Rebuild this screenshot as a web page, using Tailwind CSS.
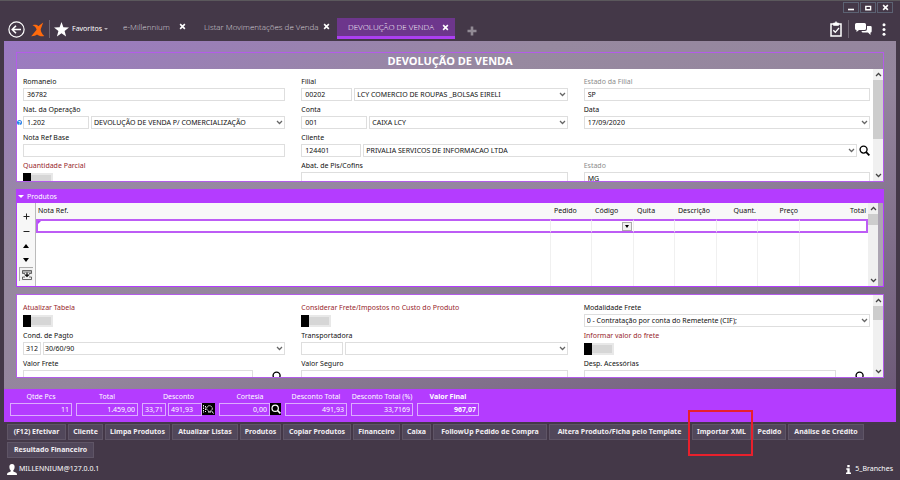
<!DOCTYPE html>
<html lang="pt-BR">
<head>
<meta charset="utf-8">
<title>Devolução de Venda</title>
<script src="https://cdn.jsdelivr.net/npm/@tailwindcss/browser@4"></script>
</head>
<body class="flex h-screen flex-col overflow-hidden border-t border-[#5b585c] bg-[#443848] font-['Noto_Sans','Open_Sans',sans-serif] text-[7px] leading-3 text-[#111]">
<svg class="hidden">
  <symbol id="chev" viewBox="0 0 8 6"><path d="M1 1.2 4 4.2 7 1.2" fill="none" stroke="currentColor" stroke-width="1.5"/></symbol>
  <symbol id="lens" viewBox="0 0 12 12"><circle cx="5" cy="5" r="3.8" fill="none" stroke="currentColor" stroke-width="1.5"/><path d="M7.8 7.8 11.3 11.3" stroke="currentColor" stroke-width="2"/></symbol>
  <symbol id="x" viewBox="0 0 8 8"><path d="M1.3 1.3 6.7 6.7M6.7 1.3 1.3 6.7" stroke="currentColor" stroke-width="1.8"/></symbol>
</svg>

<header class="flex shrink-0 flex-col text-white">
  <div class="flex h-4 items-start justify-end gap-px px-[7px] pt-px">
    <button aria-label="Minimizar" class="flex h-[11px] w-4 items-center justify-center border border-[#5c6273]"><svg class="h-2 w-2" viewBox="0 0 8 8"><path d="M1 5.5h6" stroke="#fff" stroke-width="1.6"/></svg></button>
    <button aria-label="Maximizar" class="flex h-[11px] w-4 items-center justify-center border border-[#5c6273]"><svg class="h-2 w-2" viewBox="0 0 8 8"><path d="M1.8 2.4h4.8v3.4H1.8z" fill="none" stroke="#fff" stroke-width="1.4"/></svg></button>
    <button aria-label="Fechar" class="flex h-[11px] w-4 items-center justify-center border border-[#5c6273]"><svg class="h-[7px] w-[7px]"><use href="#x"/></svg></button>
  </div>
  <nav class="flex h-6 items-start pl-2 pr-3">
    <div class="flex h-6 w-[102px] shrink-0 items-center">
      <button aria-label="Voltar" class="mr-1.5 shrink-0"><svg class="h-[17px] w-[17px]" viewBox="0 0 17 17" fill="none" stroke="#fff"><circle cx="8.5" cy="8.5" r="7.6" stroke-width="1.2"/><path d="M13 8.5H4.5M8 4.8 4.3 8.5 8 12.2" stroke-width="1.6"/></svg></button>
      <svg class="h-[15px] w-[14px] shrink-0" viewBox="0 0 14 15" fill="#ff6a0c"><path d="M1.5 3.2C4 2.500 6 2.600 7.300 4.200L12.200.4 9.700 7.300C9.800 10 11 12 13.300 14 10.500 14.800 8 14 6 12.500 4.500 13.600 2.500 14.400.2 14.200L5.600 7.700C5.200 5.500 3.800 4.100 1.500 3.200z"/></svg>
      <div class="mx-1 h-[18px] w-px shrink-0 bg-[#6f6673]"></div>
      <svg class="mr-[3px] h-[15px] w-[15px] shrink-0" viewBox="0 0 15 15" fill="#fff"><path d="M7.500 0 9.400 5.300 15 5.500 10.600 9 12.100 14.500 7.500 11.300 2.900 14.500 4.400 9 0 5.500 5.600 5.300z"/></svg>
      <button class="flex items-center gap-0.5 whitespace-nowrap">Favoritos<svg class="h-1 w-1 opacity-60" viewBox="0 0 4 4"><path d="M0 1h4L2 3z" fill="#fff"/></svg></button>
    </div>
    <div class="flex h-[21px] w-[76px] items-center justify-between pb-0.5 pl-[13px] font-['Open_Sans','Noto_Sans',sans-serif] text-[8px] font-light text-[#d6d1d8]"><a href="#" class="whitespace-nowrap">e-Millennium</a><button aria-label="Fechar aba" class="text-white"><svg class="h-[7px] w-[7px]"><use href="#x"/></svg></button></div>
    <div class="ml-[18px] flex h-[21px] w-[126px] items-center justify-between pb-0.5 font-['Open_Sans','Noto_Sans',sans-serif] text-[8px] font-light text-[#d6d1d8]"><a href="#" class="whitespace-nowrap">Listar Movimentações de Venda</a><button aria-label="Fechar aba" class="text-white"><svg class="h-[7px] w-[7px]"><use href="#x"/></svg></button></div>
    <div class="ml-[7px] mt-px flex h-[21px] w-[118px] items-center justify-between border-b-[3px] border-[#ac3ff2] bg-[#6d368c] pl-[11px] pr-1.5 font-['Open_Sans','Noto_Sans',sans-serif] text-[8px] font-light"><a href="#" class="whitespace-nowrap">DEVOLUÇÃO DE VENDA</a><button aria-label="Fechar aba"><svg class="h-[7px] w-[7px]"><use href="#x"/></svg></button></div>
    <button aria-label="Nova aba" class="ml-3 mt-[9px]"><svg class="h-[10px] w-[10px]" viewBox="0 0 10 10"><path d="M5 .5v9M.5 5h9" stroke="#918a94" stroke-width="2.600"/></svg></button>
    <div class="ml-auto flex h-6 items-center">
      <button aria-label="Tarefas"><svg class="h-4 w-3" viewBox="0 0 12 16" fill="none" stroke="#fff"><path d="M1 3h10v12H1z" stroke-width="1.500"/><path d="M3.500 2h1.500L6 .5 7 2h1.500v2.500h-5z" fill="#fff" stroke-width=".6"/><path d="M3.300 9.300 5.300 11.300 9 7" stroke-width="1.300"/></svg></button>
      <div class="mx-1.5 h-[18px] w-px bg-[#6f6673]"></div>
      <button aria-label="Mensagens" class="mr-2.5"><svg class="h-3 w-[17px]" viewBox="0 0 17 12" fill="#fff"><path d="M1.500 0h8q1.500 0 1.500 1.500v4q0 1.500-1.500 1.500H4L1.500 9V7Q0 7 0 5.500v-4Q0 0 1.500 0z"/><path d="M12 3h3.500q1.200 0 1.200 1.200v4q0 1.200-1.200 1.300V12L13 9.600H8q-1.300 0-1.500-1.500H10q2 0 2-2z"/></svg></button>
      <button aria-label="Menu" class="mr-0.5"><svg class="h-[13px] w-1" viewBox="0 0 4 13" fill="#fff"><circle cx="2" cy="1.800" r="1.500"/><circle cx="2" cy="6.500" r="1.500"/><circle cx="2" cy="11.200" r="1.500"/></svg></button>
    </div>
  </nav>
</header>

<main class="mx-1 flex min-h-0 flex-1 flex-col gap-[7px] bg-linear-[160deg,#9c79c4_0%,#9789a0_30%,#94859d_55%,#6d5a78_100%] px-3 py-[11px]">
  <section class="flex min-h-0 flex-[131] basis-0 flex-col border border-[#b45cea]">
    <h1 class="flex h-4 shrink-0 items-center justify-center text-[11px] font-bold text-white">DEVOLUÇÃO DE VENDA</h1>
    <div class="flex min-h-0 flex-1 bg-white">
      <form class="grid min-w-0 flex-1 auto-rows-[25px] grid-cols-[262fr_266fr_286fr] gap-x-4 gap-y-[3px] overflow-hidden px-1.5 pt-[7px] pr-[3px]">
        <div><label class="block" for="rom">Romaneio</label><input id="rom" class="block h-[13px] w-full border border-[#dedede] px-[3px]" value="36782"></div>
        <div><label class="block" for="fil">Filial</label>
          <div class="flex gap-0.5"><input id="fil" class="h-[13px] w-[51px] border border-[#dedede] px-[3px]" value="00202">
          <div class="relative flex-1"><select aria-label="Nome da filial" class="block h-[13px] w-full appearance-none border border-[#dedede] px-0.5"><option>LCY COMERCIO DE ROUPAS _BOLSAS EIRELI</option></select><svg class="pointer-events-none absolute right-0.5 top-1 h-[5px] w-[7px] text-[#666]"><use href="#chev"/></svg></div></div></div>
        <div><label class="block text-[#8c8c8c]" for="ef">Estado da Filial</label><input id="ef" class="block h-[13px] w-full border border-[#dedede] px-[3px]" value="SP"></div>

        <div class="relative"><label class="block" for="nat">Nat. da Operação</label><span class="absolute -left-1.5 top-4 flex h-[5px] w-[5px] items-center justify-center rounded-full bg-[#1f86e8] text-[5px] font-bold text-white">?</span>
          <div class="flex gap-0.5"><input id="nat" class="h-[13px] w-[66px] border border-[#dedede] px-[3px]" value="1.202">
          <div class="relative flex-1"><select aria-label="Descrição da operação" class="block h-[13px] w-full appearance-none border border-[#dedede] px-0.5"><option>DEVOLUÇÃO DE VENDA P/ COMERCIALIZAÇÃO</option></select><svg class="pointer-events-none absolute right-0.5 top-1 h-[5px] w-[7px] text-[#666]"><use href="#chev"/></svg></div></div></div>
        <div><label class="block" for="con">Conta</label>
          <div class="flex gap-0.5"><input id="con" class="h-[13px] w-[66px] border border-[#dedede] px-[3px]" value="001">
          <div class="relative flex-1"><select aria-label="Nome da conta" class="block h-[13px] w-full appearance-none border border-[#dedede] px-0.5"><option>CAIXA LCY</option></select><svg class="pointer-events-none absolute right-0.5 top-1 h-[5px] w-[7px] text-[#666]"><use href="#chev"/></svg></div></div></div>
        <div><label class="block" for="dat">Data</label>
          <div class="relative"><select id="dat" class="block h-[13px] w-full appearance-none border border-[#dedede] px-[3px]"><option>17/09/2020</option></select><svg class="pointer-events-none absolute right-0.5 top-1 h-[5px] w-[7px] text-[#666]"><use href="#chev"/></svg></div></div>

        <div><label class="block" for="nrb">Nota Ref Base</label><input id="nrb" class="block h-[13px] w-full border border-[#dedede] px-[3px]"></div>
        <div class="col-span-2"><label class="block" for="cli">Cliente</label>
          <div class="flex gap-0.5"><input id="cli" class="h-[13px] w-[60px] border border-[#dedede] px-[3px]" value="124401">
          <div class="relative flex-1"><select aria-label="Nome do cliente" class="block h-[13px] w-full appearance-none border border-[#dedede] px-0.5"><option>PRIVALIA SERVICOS DE INFORMACAO LTDA</option></select><svg class="pointer-events-none absolute right-0.5 top-1 h-[5px] w-[7px] text-[#666]"><use href="#chev"/></svg></div>
          <button type="button" aria-label="Buscar cliente" class="text-black"><svg class="h-[11px] w-[11px]"><use href="#lens"/></svg></button></div></div>

        <div><label class="block text-[#971f2c]" for="qp">Quantidade Parcial</label><input type="checkbox" id="qp" class="mt-px block h-3 w-[30px] appearance-none [background:linear-gradient(#000,#000)_0_0/8px_100%_no-repeat,linear-gradient(#d6d6d6,#d6d6d6)_8px_center/20px_8px_no-repeat,#e8e8e8]"></div>
        <div><label class="block" for="apc">Abat. de Pis/Cofins</label><input id="apc" class="block h-[13px] w-full border border-[#dedede] px-[3px]"></div>
        <div><label class="block text-[#8c8c8c]" for="est">Estado</label><input id="est" class="block h-[13px] w-full border border-[#dedede] px-[3px]" value="MG"></div>
      </form>
      <div class="flex w-[10px] flex-col items-center bg-[#f0f0f0] text-[#444]">
        <svg class="my-[3px] h-[5px] w-[7px] rotate-180"><use href="#chev"/></svg>
        <div class="h-[59px] w-full bg-[#cdcdcd]"></div>
        <svg class="mb-[3px] mt-auto h-[5px] w-[7px]"><use href="#chev"/></svg>
      </div>
    </div>
  </section>

  <section class="flex min-h-0 flex-[97] basis-0 flex-col border border-[#b43cff]">
    <h2 class="flex h-[13px] shrink-0 items-center gap-[3px] bg-[#b43cff] px-px text-white"><svg class="h-[5px] w-[6px]" viewBox="0 0 6 5"><path d="M0 1h6L3 4z" fill="#fff"/></svg>Produtos</h2>
    <div class="flex min-h-0 flex-1 bg-white">
      <div class="flex w-[19px] flex-col items-center border-r border-[#bbb] bg-[#f7f7f7] pt-[6px]">
        <button aria-label="Adicionar" class="flex h-[15px] items-center"><svg class="h-[7px] w-[7px]" viewBox="0 0 7 7"><path d="M3.500 .5v6M.5 3.500h6" stroke="#222"/></svg></button>
        <button aria-label="Remover" class="flex h-[14px] items-center"><svg class="h-[7px] w-[7px]" viewBox="0 0 7 7"><path d="M.5 3.500h6" stroke="#222"/></svg></button>
        <button aria-label="Subir" class="flex h-[15px] items-center"><svg class="h-1 w-[6px]" viewBox="0 0 6 4"><path d="M0 4h6L3 0z"/></svg></button>
        <button aria-label="Descer" class="flex h-[14px] items-center"><svg class="h-1 w-[6px]" viewBox="0 0 6 4"><path d="M0 0h6L3 4z"/></svg></button>
        <button aria-label="Inserir linha" class="flex h-[14px] w-[14px] shrink-0 items-center justify-center border-l border-t border-[#aaa] bg-[#f2f2f2]"><svg class="h-[10px] w-[10px]" viewBox="0 0 10 10" fill="none" stroke="#444" stroke-width=".8"><path d="M3 3.500H.5v-3h9v3H7M3 7H.5v2.500h9V7H7M.5 2h9"/><path d="M4.400 2.500h1.200v2H8L5 7.200 2 4.500h2.400z" fill="#111" stroke="none"/></svg></button>
      </div>
      <table class="h-full flex-1 table-fixed border-separate border-spacing-0 text-left">
        <colgroup><col><col class="w-[41px]"><col class="w-[42px]"><col class="w-[41px]"><col class="w-[42px]"><col class="w-[41px]"><col class="w-[42px]"><col class="w-[68px]"></colgroup>
        <thead class="bg-[#f8f8f8]"><tr class="h-4">
          <th class="px-0.5 font-normal">Nota Ref.</th><th class="px-[3px] font-normal">Pedido</th><th class="px-[3px] font-normal">Código</th><th class="px-[3px] font-normal">Quita</th><th class="px-[3px] font-normal">Descrição</th><th class="px-0.5 text-right font-normal">Quant.</th><th class="px-0.5 text-right font-normal">Preço</th><th class="px-0.5 text-right font-normal">Total</th></tr></thead>
        <tbody>
          <tr class="h-[14px]">
            <td class="border-y-2 border-l-2 border-r border-[#bd5cf5] border-r-[#eee] p-0"><svg class="block h-[10px] w-[3px]" viewBox="0 0 3 10"><path d="M0 0h3L0 3z" fill="#b43cff"/></svg></td>
            <td class="border-y-2 border-r border-[#bd5cf5] border-r-[#eee] p-0"></td>
            <td class="border-y-2 border-r border-[#bd5cf5] border-r-[#eee] p-0"><button aria-label="Abrir lista de códigos" class="ml-auto mr-px flex h-[9px] w-[10px] items-center justify-center border border-[#aaa] bg-[#f0f0f0]"><svg class="h-[3px] w-1" viewBox="0 0 4 3"><path d="M0 0h4L2 3z"/></svg></button></td>
            <td class="border-y-2 border-r border-[#bd5cf5] border-r-[#eee] p-0"></td><td class="border-y-2 border-r border-[#bd5cf5] border-r-[#eee] p-0"></td><td class="border-y-2 border-r border-[#bd5cf5] border-r-[#eee] p-0"></td><td class="border-y-2 border-r border-[#bd5cf5] border-r-[#eee] p-0"></td>
            <td class="border-y-2 border-r-2 border-[#bd5cf5] p-0"></td>
          </tr>
          <tr><td class="border-r border-[#f0f0f0]"></td><td class="border-r border-[#f0f0f0]"></td><td class="border-r border-[#f0f0f0]"></td><td class="border-r border-[#f0f0f0]"></td><td class="border-r border-[#f0f0f0]"></td><td class="border-r border-[#f0f0f0]"></td><td class="border-r border-[#f0f0f0]"></td><td></td></tr>
        </tbody>
      </table>
      <div class="flex w-[10px] flex-col items-center bg-[#f0f0f0] text-[#444]">
        <svg class="my-[3px] h-[5px] w-[7px] rotate-180"><use href="#chev"/></svg>
        <div class="h-[11px] w-full bg-[#cdcdcd]"></div>
        <svg class="mb-[3px] mt-auto h-[5px] w-[7px]"><use href="#chev"/></svg>
      </div>
      <div class="w-[5px] bg-[#aca5b2]"></div>
    </div>
  </section>

  <section class="flex min-h-0 flex-[84] basis-0 border border-[#b45cea] bg-white">
    <form class="grid min-w-0 flex-1 grid-cols-[262fr_266fr_286fr] content-start gap-x-4 overflow-hidden px-1.5 pt-[7px] pr-[3px]">
      <div class="flex flex-col gap-[3px]">
        <div class="h-[25px]"><label class="block text-[#971f2c]" for="at">Atualizar Tabela</label><input type="checkbox" id="at" class="mt-px block h-3 w-[30px] appearance-none [background:linear-gradient(#000,#000)_0_0/8px_100%_no-repeat,linear-gradient(#d6d6d6,#d6d6d6)_8px_center/20px_8px_no-repeat,#e8e8e8]"></div>
        <div class="h-[25px]"><label class="block" for="cp">Cond. de Pagto</label>
          <div class="flex gap-0.5"><input id="cp" class="h-[13px] w-[18px] border border-[#dedede] px-0.5" value="312">
          <div class="relative flex-1"><select aria-label="Condição de pagamento" class="block h-[13px] w-full appearance-none border border-[#dedede] px-px"><option>30/60/90</option></select><svg class="pointer-events-none absolute right-0.5 top-1 h-[5px] w-[7px] text-[#666]"><use href="#chev"/></svg></div></div></div>
        <div><label class="block" for="vf">Valor Frete</label><div class="flex items-start justify-between pr-0.5"><input id="vf" class="block h-[13px] w-[230px] border border-[#dedede] px-[3px]"><button type="button" aria-label="Buscar frete" class="pt-px text-black"><svg class="h-[11px] w-[11px]"><use href="#lens"/></svg></button></div></div>
      </div>
      <div class="flex flex-col gap-[3px]">
        <div class="h-[25px]"><label class="block text-[#971f2c]" for="cf">Considerar Frete/Impostos no Custo do Produto</label><input type="checkbox" id="cf" class="mt-px block h-3 w-[30px] appearance-none [background:linear-gradient(#000,#000)_0_0/8px_100%_no-repeat,linear-gradient(#d6d6d6,#d6d6d6)_8px_center/20px_8px_no-repeat,#e8e8e8]"></div>
        <div class="h-[25px]"><label class="block" for="tr">Transportadora</label>
          <div class="flex gap-0.5"><input id="tr" class="h-[13px] w-[42px] border border-[#dedede] px-[3px]">
          <div class="relative flex-1"><select aria-label="Nome da transportadora" class="block h-[13px] w-full appearance-none border border-[#dedede] px-0.5"><option></option></select><svg class="pointer-events-none absolute right-0.5 top-1 h-[5px] w-[7px] text-[#666]"><use href="#chev"/></svg></div></div></div>
        <div><label class="block" for="vs">Valor Seguro</label><input id="vs" class="block h-[13px] w-full border border-[#dedede] px-[3px]"></div>
      </div>
      <div class="flex flex-col gap-[3px]">
        <div class="h-[25px]"><label class="block" for="mf">Modalidade Frete</label>
          <div class="relative"><select id="mf" class="block h-[13px] w-full appearance-none border border-[#dedede] px-0.5"><option>0 - Contratação por conta do Remetente (CIF);</option></select><svg class="pointer-events-none absolute right-0.5 top-1 h-[5px] w-[7px] text-[#666]"><use href="#chev"/></svg></div></div>
        <div class="h-[25px]"><label class="block text-[#971f2c]" for="iv">Informar valor do frete</label><input type="checkbox" id="iv" class="mt-px block h-3 w-[30px] appearance-none [background:linear-gradient(#000,#000)_0_0/8px_100%_no-repeat,linear-gradient(#d6d6d6,#d6d6d6)_8px_center/20px_8px_no-repeat,#e8e8e8]"></div>
        <div><label class="block" for="da">Desp. Acessórias</label><div class="flex items-start justify-between pr-1"><input id="da" class="block h-[13px] w-[252px] border border-[#dedede] px-[3px]"><button type="button" aria-label="Buscar despesas" class="pt-px text-black"><svg class="h-[11px] w-[11px]"><use href="#lens"/></svg></button></div></div>
      </div>
    </form>
    <div class="flex w-[10px] flex-col items-center bg-[#f0f0f0] text-[#444]">
      <svg class="my-[3px] h-[5px] w-[7px] rotate-180"><use href="#chev"/></svg>
      <div class="h-[14px] w-full bg-[#cdcdcd]"></div>
      <svg class="mb-[3px] mt-auto h-[5px] w-[7px]"><use href="#chev"/></svg>
    </div>
  </section>
</main>

<section aria-label="Totais" class="mx-1 flex h-[33px] shrink-0 items-start gap-1 bg-[#b43cff] px-1.5 pt-0.5 text-white">
  <div class="flex w-[62px] flex-col text-center"><label for="t1">Qtde Pcs</label><input id="t1" class="h-[13px] w-full border border-[#dcabff] px-0.5 text-right" value="11"></div>
  <div class="flex w-[62px] flex-col text-center"><label for="t2">Total</label><input id="t2" class="h-[13px] w-full border border-[#dcabff] px-0.5 text-right" value="1.459,00"></div>
  <div class="flex w-[73px] flex-col text-center"><label for="t3">Desconto</label><div class="flex"><input id="t3" class="mr-0.5 h-[13px] w-6 border border-[#dcabff] text-center" value="33,71"><input aria-label="Valor do desconto" class="h-[13px] w-[34px] border border-[#dcabff] px-0.5" value="491,93"><button aria-label="Buscar desconto" class="flex h-3 w-[13px] items-center justify-center bg-black"><svg class="h-[10px] w-[11px]" viewBox="0 0 11 10" fill="none" stroke="#eee"><path d="M.5 1v8M2.500 2v6" stroke-dasharray="1.500 1"/><circle cx="6.500" cy="4.500" r="2.800" stroke-dasharray="1.600 .7"/><path d="M8.500 6.800 10.500 9.500M5 8h3"/></svg></button></div></div>
  <div class="flex w-[62px] flex-col text-center"><label for="t4">Cortesia</label><div class="flex"><input id="t4" class="h-[13px] w-[51px] border border-[#dcabff] px-0.5 text-right" value="0,00"><button aria-label="Buscar cortesia" class="flex h-3 w-[11px] items-center justify-center bg-black text-white"><svg class="h-[10px] w-[10px]"><use href="#lens"/></svg></button></div></div>
  <div class="flex w-[62px] flex-col text-center"><label for="t5">Desconto Total</label><input id="t5" class="h-[13px] w-full border border-[#dcabff] px-0.5 text-right" value="491,93"></div>
  <div class="flex w-[62px] flex-col text-center"><label for="t6" class="whitespace-nowrap">Desconto Total (%)</label><input id="t6" class="h-[13px] w-full border border-[#dcabff] px-0.5 text-right" value="33,7169"></div>
  <div class="flex w-[62px] flex-col text-center font-bold"><label for="t7">Valor Final</label><input id="t7" class="h-[13px] w-full border border-[#dcabff] px-0.5 text-right" value="967,07"></div>
</section>

<footer class="flex shrink-0 flex-col px-[7px] pt-0.5 text-white">
  <div class="flex flex-wrap gap-0.5 font-bold text-[#f1eef2] [&_button]:h-4 [&_button]:border [&_button]:border-[#5f5566] [&_button]:bg-[#51475a] [&_button]:whitespace-nowrap">
    <button class="w-[59px]">(F12) Efetivar</button>
    <button class="w-[35px]">Cliente</button>
    <button class="w-[65px]">Limpa Produtos</button>
    <button class="w-[66px]">Atualizar Listas</button>
    <button class="w-[41px]">Produtos</button>
    <button class="w-[68px]">Copiar Produtos</button>
    <button class="w-[47px]">Financeiro</button>
    <button class="w-[29px]">Caixa</button>
    <button class="w-[114px]">FollowUp Pedido de Compra</button>
    <button class="w-[141px]">Altera Produto/Ficha pelo Template</button>
    <div class="relative flex"><button class="w-[59px]">Importar XML</button><span class="pointer-events-none absolute -bottom-4 -left-1 -right-0.5 -top-3.5 border-2 border-[#e8202c]"></span></div>
    <button class="w-[33px]">Pedido</button>
    <button class="w-[76px]">Análise de Crédito</button>
    <button class="w-[87px]">Resultado Financeiro</button>
  </div>
  <div class="flex items-center justify-between pb-[5px] pt-[5px]">
    <div class="flex items-center gap-0.5"><svg class="h-[11px] w-[10px]" viewBox="0 0 10 11" fill="#fff"><path d="M5 0C7 0 7.800 1.400 7.600 3.200 7.500 4.800 7 5.600 6.300 6.300V7.500L9.200 8.700Q10 9.200 10 11H0Q0 9.200.8 8.700L3.700 7.500V6.300C3 5.600 2.500 4.800 2.400 3.200 2.200 1.400 3 0 5 0z"/></svg>MILLENNIUM@127.0.0.1</div>
    <div class="flex items-center gap-1"><svg class="h-[9px] w-[5px]" viewBox="0 0 5 9" fill="#fff"><path d="M1.300 0h2.400v2.200H1.300zM.3 3.200h3.400v4.300H5V9H0V7.500h1.300V4.700h-1z"/></svg>5_Branches</div>
  </div>
</footer>
</body>
</html>
